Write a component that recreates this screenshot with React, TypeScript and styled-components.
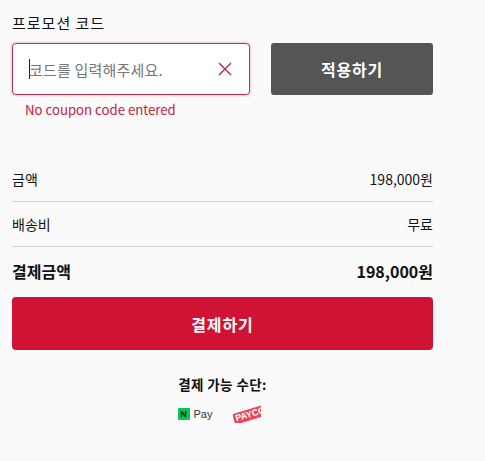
import React from 'react';
import styled, { createGlobalStyle } from 'styled-components';

const GlobalStyle = createGlobalStyle`
  html, body {
    margin: 0;
    padding: 0;
    background-color: #fafafa;
  }
  body {
    font-family: "Noto Sans CJK KR", "Noto Sans", sans-serif;
    color: #111;
  }
`;

const Page = styled.div`
  width: 421px;
  height: 461px;
  padding: 13px 0 0 12px;
  box-sizing: content-box;
  overflow: hidden;
`;

const PromoLabel = styled.div`
  font-size: 15px;
  line-height: 20px;
  letter-spacing: 1px;
  font-weight: 400;
  color: #111;
`;

const PromoRow = styled.div`
  display: flex;
  gap: 21px;
  margin-top: 10px;
`;

const InputBox = styled.div`
  position: relative;
  width: 238px;
  height: 52px;
  box-sizing: border-box;
  display: flex;
  align-items: center;
  padding: 0 15px 0 16px;
  background-color: #fff;
  border: 1px solid #b5344f;
  border-radius: 4px;
  box-shadow: 0 0 3px rgba(200, 30, 60, 0.45);
`;

const Caret = styled.span`
  position: absolute;
  left: 16px;
  top: 15px;
  width: 1px;
  height: 20px;
  background-color: #222;
`;

const CodeInput = styled.input`
  flex: 1;
  min-width: 0;
  padding: 0;
  border: none;
  outline: none;
  background: transparent;
  font-family: inherit;
  font-size: 15px;
  letter-spacing: 0.2px;
  color: #111;
  &::placeholder {
    color: #777;
    opacity: 1;
  }
`;

const ClearIcon = styled.svg`
  width: 14px;
  height: 14px;
  flex-shrink: 0;
  margin-right: 2px;
`;

const ApplyButton = styled.button`
  width: 162px;
  height: 52px;
  border: none;
  border-radius: 3px;
  background-color: #555;
  color: #fff;
  font-family: inherit;
  font-size: 16px;
  font-weight: 700;
  letter-spacing: 0.8px;
  cursor: pointer;
`;

const ErrorText = styled.div`
  margin: 5px 0 0 13px;
  font-size: 13.2px;
  line-height: 20px;
  color: #c8203f;
`;

const Summary = styled.div`
  margin-top: 37px;
`;

const Row = styled.div<{ $total?: boolean }>`
  display: flex;
  justify-content: space-between;
  align-items: center;
  height: ${(p) => (p.$total ? '48px' : '44px')};
  padding-bottom: ${(p) => (p.$total ? '2px' : '0')};
  border-bottom: ${(p) => (p.$total ? 'none' : '1px solid #d4d4d4')};
  font-size: ${(p) => (p.$total ? '16px' : '14px')};
  font-weight: ${(p) => (p.$total ? 700 : 400)};
  color: #111;
`;

const PayButton = styled.button`
  display: block;
  width: 100%;
  height: 53px;
  border: none;
  border-radius: 4px;
  background-color: #d01334;
  color: #fff;
  font-family: inherit;
  font-size: 16px;
  font-weight: 700;
  letter-spacing: 0.9px;
  cursor: pointer;
`;

const MethodsTitle = styled.div`
  margin-top: 24px;
  text-align: center;
  font-size: 13.5px;
  line-height: 20px;
  font-weight: 700;
  letter-spacing: 0.4px;
  color: #111;
`;

const Methods = styled.div`
  display: flex;
  justify-content: center;
  align-items: center;
  gap: 21px;
  margin-top: 10px;
  padding-right: 6px;
  height: 20px;
`;

const NaverPay = styled.div`
  display: flex;
  align-items: center;
  gap: 4px;
  font-family: "Liberation Sans", sans-serif;
  font-size: 11px;
  color: #333;
`;

const NaverMark = styled.span`
  width: 12px;
  height: 12px;
  display: flex;
  align-items: center;
  justify-content: center;
  border-radius: 1px;
  background-color: #03c75a;
  color: #111;
  font-size: 9px;
  font-weight: 900;
  line-height: 1;
`;

const PaycoClip = styled.div`
  width: 28px;
  height: 18px;
  overflow: hidden;
  display: flex;
  align-items: center;
`;

const PaycoMark = styled.span`
  display: block;
  padding: 0 2px;
  background-color: #e8475c;
  color: #fff;
  font-family: "Liberation Sans", sans-serif;
  font-size: 9px;
  font-weight: 700;
  line-height: 11px;
  transform: rotate(-17deg);
  transform-origin: center;
  white-space: nowrap;
`;

export default function App() {
  return (
    <>
      <GlobalStyle />
      <Page>
        <PromoLabel>프로모션 코드</PromoLabel>
        <PromoRow>
          <InputBox>
            <Caret />
            <CodeInput placeholder="코드를 입력해주세요." />
            <ClearIcon viewBox="0 0 14 14" fill="none" stroke="#b5344f" strokeWidth="1.5">
              <path d="M1 1l12 12M13 1L1 13" />
            </ClearIcon>
          </InputBox>
          <ApplyButton>적용하기</ApplyButton>
        </PromoRow>
        <ErrorText>No coupon code entered</ErrorText>
        <Summary>
          <Row>
            <span>금액</span>
            <span>198,000원</span>
          </Row>
          <Row>
            <span>배송비</span>
            <span>무료</span>
          </Row>
          <Row $total>
            <span>결제금액</span>
            <span>198,000원</span>
          </Row>
        </Summary>
        <PayButton>결제하기</PayButton>
        <MethodsTitle>결제 가능 수단:</MethodsTitle>
        <Methods>
          <NaverPay>
            <NaverMark>N</NaverMark>
            Pay
          </NaverPay>
          <PaycoClip>
            <PaycoMark>PAYCO</PaycoMark>
          </PaycoClip>
        </Methods>
      </Page>
    </>
  );
}
